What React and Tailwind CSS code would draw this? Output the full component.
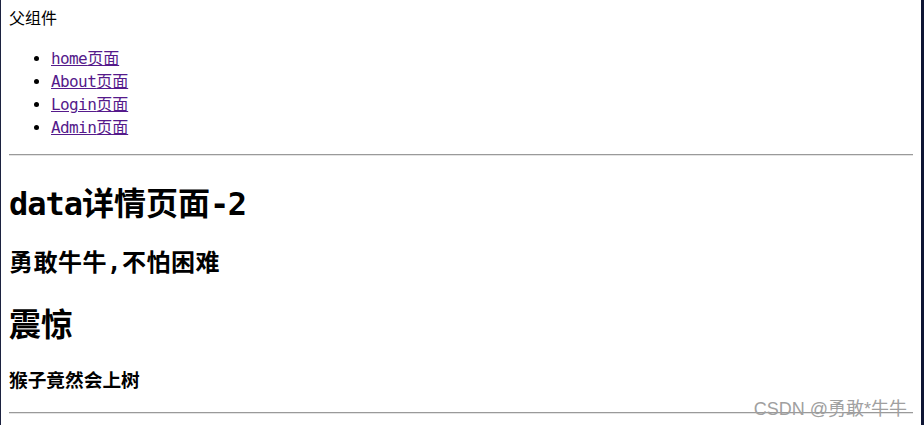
import React from 'react';

const mono = { fontFamily: '"DejaVu Sans Mono", "Noto Sans CJK SC", monospace' };

const links = ['home', 'About', 'Login', 'Admin'];

function Rule({ className }) {
  return <div className={'border-t border-t-[#9a9a9a] border-b border-b-[#e4e4e4] ' + className} />;
}

export default function App() {
  return (
    <div className="relative flex h-[425px] w-[924px] overflow-hidden bg-white text-black" style={mono}>
      {/* window frame, left */}
      <div className="w-[1px] bg-[#1c2240]" />

      <div className="flex-1 px-[8px]">
        <div className="pt-[9px] text-[16px] leading-[20px]">父组件</div>

        <ul className="mt-[18px] list-disc pl-[42px] text-[16px] leading-[23px]">
          {links.map(name => (
            <li key={name}>
              <a href="#" className="text-[#551a8b] underline">
                <span className="tracking-[-0.6px]">{name}</span>页面
              </a>
            </li>
          ))}
        </ul>

        <Rule className="mt-[15px]" />

        <h1 className="mt-[28px] text-[32px] font-bold leading-[40px]">
          <span className="tracking-[-1px]">data</span>详情页面<span className="tracking-[-1.5px]">-2</span>
        </h1>

        <h2 className="mt-[24px] text-[24px] font-bold leading-[30px] tracking-[0.5px]">勇敢牛牛,不怕困难</h2>

        <h1 className="mt-[27px] text-[32px] font-bold leading-[40px]">震惊</h1>

        <h3 className="mt-[24px] text-[18.7px] font-bold leading-[24px]">猴子竟然会上树</h3>

        <Rule className="mt-[19px]" />
      </div>

      {/* window frame, right */}
      <div className="w-[3px] bg-[#0e1534]" />

      {/* watermark */}
      <div
        className="absolute bottom-[6px] right-[17px] text-[18px] leading-[20px] text-[#a0a0a0]"
        style={{ fontFamily: '"Liberation Sans", "Noto Sans CJK SC", sans-serif' }}
      >
        CSDN @勇敢*牛牛
      </div>
    </div>
  );
}
